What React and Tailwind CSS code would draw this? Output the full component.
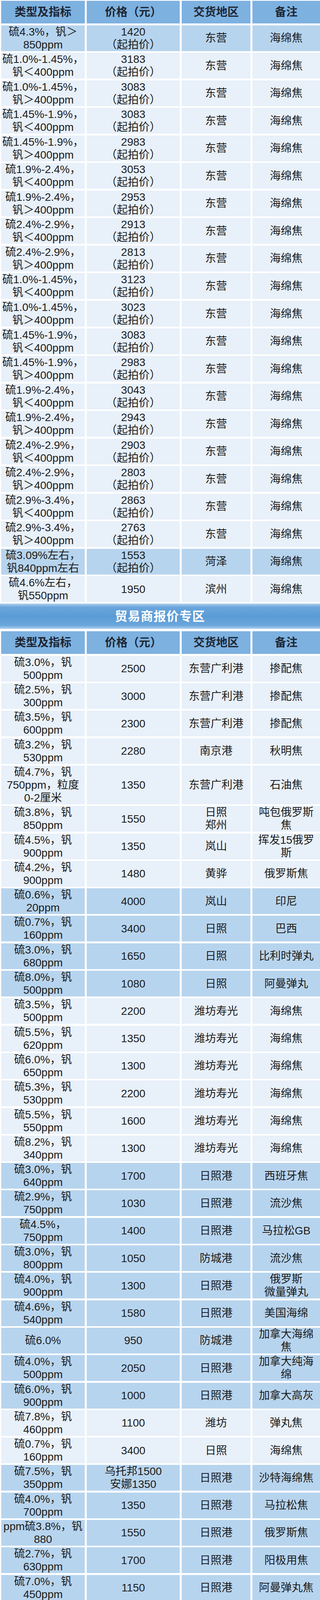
import React from 'react';

// 上半部分：起拍价表
const TOP_SPECS = [
  ['1.0%-1.45%', '＜', '3183'],
  ['1.0%-1.45%', '＞', '3083'],
  ['1.45%-1.9%', '＜', '3083'],
  ['1.45%-1.9%', '＞', '2983'],
  ['1.9%-2.4%', '＜', '3053'],
  ['1.9%-2.4%', '＞', '2953'],
  ['2.4%-2.9%', '＜', '2913'],
  ['2.4%-2.9%', '＞', '2813'],
  ['1.0%-1.45%', '＜', '3123'],
  ['1.0%-1.45%', '＞', '3023'],
  ['1.45%-1.9%', '＜', '3083'],
  ['1.45%-1.9%', '＞', '2983'],
  ['1.9%-2.4%', '＜', '3043'],
  ['1.9%-2.4%', '＞', '2943'],
  ['2.4%-2.9%', '＜', '2903'],
  ['2.4%-2.9%', '＞', '2803'],
  ['2.9%-3.4%', '＜', '2863'],
  ['2.9%-3.4%', '＞', '2763'],
];

const TOP_ROWS = [
  { c: ['硫4.3%，钒＞\n850ppm', '1420\n（起拍价）', '东营', '海绵焦'], tone: 'd' },
  ...TOP_SPECS.map(([s, v, p]) => ({
    c: [`硫${s}，\n钒${v}400ppm`, `${p}\n（起拍价）`, '东营', '海绵焦'],
    tone: 'l',
  })),
  { c: ['硫3.09%左右，\n钒840ppm左右', '1553\n（起拍价）', '菏泽', '海绵焦'], tone: 'd' },
  { c: ['硫4.6%左右，\n钒550ppm', '1950', '滨州', '海绵焦'], tone: 'l' },
];

// 贸易商报价专区
const TRADER_ROWS = [
  { c: ['硫3.0%，钒\n500ppm', '2500', '东营广利港', '掺配焦'], tone: 'l' },
  { c: ['硫2.5%，钒\n300ppm', '3000', '东营广利港', '掺配焦'], tone: 'l' },
  { c: ['硫3.5%，钒\n600ppm', '2300', '东营广利港', '掺配焦'], tone: 'l' },
  { c: ['硫3.2%，钒\n530ppm', '2280', '南京港', '秋明焦'], tone: 'l' },
  { c: ['硫4.7%，钒\n750ppm，粒度\n0-2厘米', '1350', '东营广利港', '石油焦'], tone: 'l', tall: 'h-[99px]' },
  { c: ['硫3.8%，钒\n850ppm', '1550', '日照\n郑州', '吨包俄罗斯\n焦'], tone: 'l' },
  { c: ['硫4.5%，钒\n900ppm', '1350', '岚山', '挥发15俄罗\n斯'], tone: 'l' },
  { c: ['硫4.2%，钒\n900ppm', '1480', '黄骅', '俄罗斯焦'], tone: 'l' },
  { c: ['硫0.6%，钒\n20ppm', '4000', '岚山', '印尼'], tone: 'd' },
  { c: ['硫0.7%，钒\n160ppm', '3400', '日照', '巴西'], tone: 'd' },
  { c: ['硫3.0%，钒\n680ppm', '1650', '日照', '比利时弹丸'], tone: 'd' },
  { c: ['硫8.0%，钒\n500ppm', '1080', '日照', '阿曼弹丸'], tone: 'd' },
  { c: ['硫3.5%，钒\n500ppm', '2200', '潍坊寿光', '海绵焦'], tone: 'l' },
  { c: ['硫5.5%，钒\n620ppm', '1350', '潍坊寿光', '海绵焦'], tone: 'l' },
  { c: ['硫6.0%，钒\n650ppm', '1300', '潍坊寿光', '海绵焦'], tone: 'l' },
  { c: ['硫5.3%，钒\n530ppm', '2200', '潍坊寿光', '海绵焦'], tone: 'l' },
  { c: ['硫5.5%，钒\n550ppm', '1600', '潍坊寿光', '海绵焦'], tone: 'l' },
  { c: ['硫8.2%，钒\n340ppm', '1300', '潍坊寿光', '海绵焦'], tone: 'l' },
  { c: ['硫3.0%，钒\n640ppm', '1700', '日照港', '西班牙焦'], tone: 'd' },
  { c: ['硫2.9%，钒\n750ppm', '1030', '日照港', '流沙焦'], tone: 'd' },
  { c: ['硫4.5%，\n750ppm', '1400', '日照港', '马拉松GB'], tone: 'd' },
  { c: ['硫3.0%，钒\n800ppm', '1050', '防城港', '流沙焦'], tone: 'd' },
  { c: ['硫4.0%，钒\n900ppm', '1300', '日照港', '俄罗斯\n微量弹丸'], tone: 'd' },
  { c: ['硫4.6%，钒\n540ppm', '1580', '日照港', '美国海绵'], tone: 'd' },
  { c: ['硫6.0%', '950', '防城港', '加拿大海绵\n焦'], tone: 'd' },
  { c: ['硫4.0%，钒\n500ppm', '2050', '日照港', '加拿大纯海\n绵'], tone: 'd' },
  { c: ['硫6.0%，钒\n900ppm', '1000', '日照港', '加拿大高灰'], tone: 'd' },
  { c: ['硫7.8%，钒\n460ppm', '1100', '潍坊', '弹丸焦'], tone: 'l' },
  { c: ['硫0.7%，钒\n160ppm', '3400', '日照', '海绵焦'], tone: 'l' },
  { c: ['硫7.5%，钒\n350ppm', '乌托邦1500\n安娜1350', '日照港', '沙特海绵焦'], tone: 'd' },
  { c: ['硫4.0%，钒\n700ppm', '1350', '日照港', '马拉松焦'], tone: 'd' },
  { c: ['ppm硫3.8%，钒\n880', '1550', '日照港', '俄罗斯焦'], tone: 'd' },
  { c: ['硫2.7%，钒\n630ppm', '1700', '日照港', '阳极用焦'], tone: 'd' },
  { c: ['硫7.0%，钒\n450ppm', '1150', '日照港', '阿曼弹丸焦'], tone: 'd' },
  { c: ['硫7.8%，钒\n380ppm', '1070', '日照港', '台湾焦'], tone: 'd' },
  { c: ['硫0.6%，钒\n130ppm', '3400', '日照港', '巴西焦'], tone: 'd' },
  { c: ['硫0.5%，钒\n30ppm', '3950', '日照港', '印尼焦'], tone: 'd' },
  { c: ['硫3.3%，钒\n420ppm以内', '2420', '赣榆港', '掺配焦'], tone: 'l' },
  { c: ['硫3.4%，钒\n330ppm', '2580', '赣榆港', '掺配焦'], tone: 'l' },
  { c: ['硫3.8%，钒\n480ppm以内', '2200', '赣榆港', '地炼焦'], tone: 'l' },
  { c: ['硫3.7%，钒\n440ppm以内', '2260', '赣榆港', '地炼焦'], tone: 'l' },
  { c: ['硫4.0%，钒\n550ppm', '2020', '赣榆港', '地炼焦'], tone: 'l' },
  { c: ['硫6.8-7.0%，\n钒240-260ppm', '1900', '赣榆港', '日本焦'], tone: 'l' },
  { c: ['硫8.3%，钒\n310ppm', '1380', '赣榆港', '沙特焦'], tone: 'l' },
  { c: ['硫7.9%，钒\n380ppm', '1360', '赣榆港', '沙特焦'], tone: 'l' },
  { c: ['硫7.0%，钒\n450ppm', '1200', '赣榆港\n日照港', '阿曼弹丸焦'], tone: 'l' },
  { c: ['硫5.7%，钒\n610ppm', '1540', '赣榆港', '浙石化'], tone: 'l' },
  { c: ['硫5.7%，钒\n610ppm', '1540', '赣榆港', '江苏盛虹'], tone: 'l' },
  { c: ['硫5.7%，钒\n610ppm', '1540', '赣榆港', '江苏盛虹'], tone: 'l' },
  { c: ['硫3.8%，钒\n800ppm', '1550', '黄骅港', '俄罗斯海绵\n焦'], tone: 'd' },
  { c: ['硫4.5%', '1050', '日照港', '海绵焦'], tone: 'd' },
  { c: ['硫8.3%，钒\n340ppm', '暂未报价', '日照港\n潍坊港', '沙特焦'], tone: 'l', tall: 'h-[130px]' },
  { c: ['硫1.8%，钒\n400ppm', '暂未报价', '日照港', '海绵焦'], tone: 'd' },
  { c: ['硫6.0%，钒\n450ppm', '暂未报价', '日照港', '海绵焦'], tone: 'd' },
  { c: ['硫2.5%，钒\n950ppm', '暂未报价', '日照港', '弹丸焦'], tone: 'd' },
  { c: ['硫2.8%，钒\n800ppm', '暂未报价', '日照港', '弹丸焦'], tone: 'd' },
  { c: ['硫8.0%，钒\n400ppm', '暂未报价', '日照', '海绵焦'], tone: 'l' },
  { c: ['硫3.2%，钒\n480ppm', '暂未报价', '日照港', '海绵焦'], tone: 'd' },
  { c: ['硫0.5%，钒\n20ppm', '4000', '岚山港', '印尼焦'], tone: 'l' },
  { c: ['硫4.5%', '1350', '岚山港', '俄罗斯焦'], tone: 'l' },
  { c: ['硫4.5%', '1050', '日照港\n岚山港', '委内焦'], tone: 'l' },
];

const HEADERS = ['类型及指标', '价格（元）', '交货地区', '备注'];
const COL_W = ['w-[214px]', 'w-[238px]', 'w-[176px]', 'w-[173px]'];

const HeaderRow = () => (
  <div className="flex h-[58px] shrink-0 gap-x-[5px] pl-[3px]">
    {HEADERS.map((t, i) => (
      <div
        key={t}
        className={`${COL_W[i]} shrink-0 flex items-center justify-center bg-[#7db1e0] text-[29px] leading-[33px] font-bold text-[#1d2633]`}
      >
        {t}
      </div>
    ))}
  </div>
);

const Row = ({ c, tone, tall }) => {
  const bg = tone === 'd' ? 'bg-[#b7d4ee]' : 'bg-[#e8f0f9]';
  return (
    <div className={`flex shrink-0 gap-x-[5px] pl-[3px] ${tall || 'h-[66px]'}`}>
      {c.map((t, i) => (
        <div
          key={i}
          className={`${COL_W[i]} ${bg} shrink-0 flex flex-col items-center justify-center text-center text-[28px] leading-[33px] text-[#1c1c1c]`}
        >
          {t.split('\n').map((line, j) => (
            <span key={j} className="block whitespace-nowrap">
              {line}
            </span>
          ))}
        </div>
      ))}
    </div>
  );
};

export default function App() {
  return (
    <div className="w-[819px] bg-white pt-[2px] pb-[6px] font-['Liberation_Sans','Noto_Sans_CJK_SC',sans-serif]">
      <div className="flex flex-col gap-y-[4.55px]">
        <HeaderRow />
        {TOP_ROWS.map((r, i) => (
          <Row key={i} {...r} />
        ))}
      </div>

      <div className="mt-[4px] h-[65px] flex items-center justify-center bg-[linear-gradient(to_bottom,#b3d2ee_0%,#6aa6dc_14%,#5b9bd5_50%,#6aa6dc_86%,#b3d2ee_100%)]">
        <span className="text-[32px] leading-[36px] font-bold text-white tracking-[1px]">
          贸易商报价专区
        </span>
      </div>

      <div className="mt-[6px] flex flex-col gap-y-[4.3px]">
        <HeaderRow />
        {TRADER_ROWS.map((r, i) => (
          <Row key={i} {...r} />
        ))}
      </div>
    </div>
  );
}
